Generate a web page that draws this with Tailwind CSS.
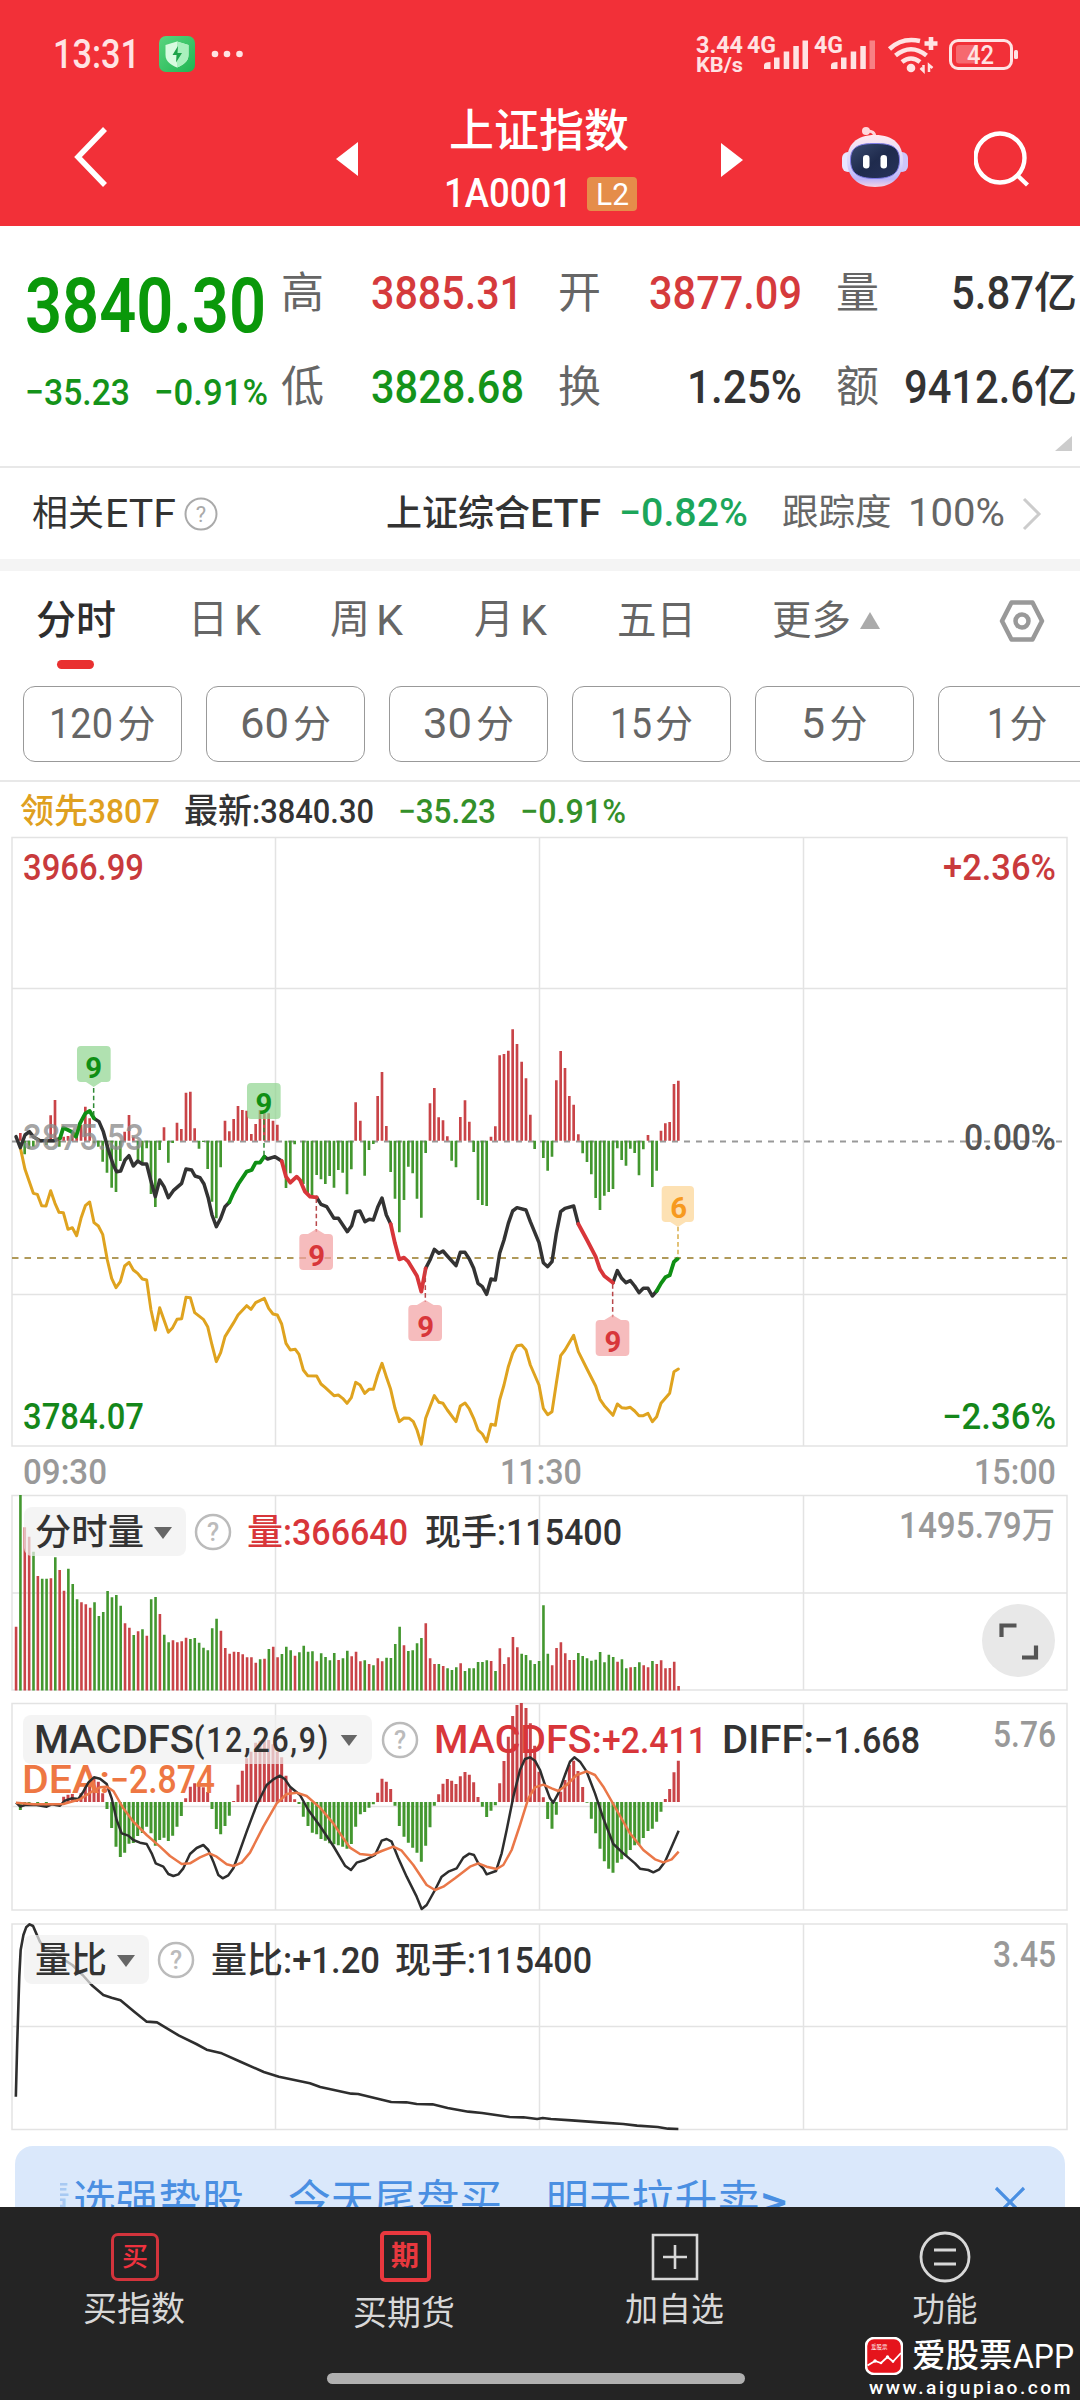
<!DOCTYPE html>
<html lang="zh-CN">
<head>
<meta charset="utf-8">
<title>上证指数</title>
<script src="https://cdn.jsdelivr.net/npm/@tailwindcss/browser@4"></script>
</head>
<body class="w-[1080px] h-[2400px] overflow-hidden bg-white font-['Roboto','Noto_Sans_CJK_SC',sans-serif] text-[#333]">
<div class="flex flex-col w-[1080px] h-[2400px] overflow-hidden">

  <!-- header -->
  <header class="h-[226px] shrink-0 bg-[#f23038] text-white">
    <div class="flex items-center h-[108px] pl-[53px]">
      <span data-w="87" class="text-[41px] leading-none font-medium text-[#ffe3e3]">13:31</span>
      <svg class="ml-[19px] w-[36px] h-[36px] shrink-0" viewBox="0 0 36 36">
        <defs><linearGradient id="gi" x1="0" y1="0" x2="1" y2="1"><stop offset="0" stop-color="#5ad57f"/><stop offset="1" stop-color="#1fb552"/></linearGradient></defs>
        <rect width="36" height="36" rx="7" fill="url(#gi)"/>
        <path d="M18 5.5 29.500 9v10c0 6-5 10-11.500 12.500C11.500 29 6.500 25 6.500 19V9Z" fill="#d8fbe0"/>
        <path d="M18 5.500 29.500 9v10c0 6-5 10-11.500 12.500Z" fill="#a9f0bd"/>
        <path d="M19 10l-5.500 9h4l-.5 7.500 6-9.500h-4.500Z" fill="#1ea34a"/>
      </svg>
      <svg class="ml-[16px] w-[32px] h-[8px] shrink-0" viewBox="0 0 32 8" fill="#ffe3e3"><circle cx="4" cy="4" r="3.300"/><circle cx="16" cy="4" r="3.300"/><circle cx="28.500" cy="4" r="3.300"/></svg>
      <svg class="ml-[447px] w-[340px] h-[60px] shrink-0" viewBox="690 24 340 60" fill="#ffe3e3" font-weight="700">
        <text x="696" y="53" font-size="23" textLength="47" lengthAdjust="spacingAndGlyphs">3.44</text>
        <text x="696" y="71.500" font-size="21" textLength="47" lengthAdjust="spacingAndGlyphs">KB/s</text>
        <text x="747" y="53" font-size="23" textLength="29" lengthAdjust="spacingAndGlyphs">4G</text>
        <text x="814" y="53" font-size="23" textLength="29" lengthAdjust="spacingAndGlyphs">4G</text>
        <path d="M764 69v-4q0-3 6.500-3V69ZM774 69V57.500h5.500V69ZM783.700 69V51.500h5.500V69ZM793.300 69V46h5.500V69ZM802.500 69V40.500h5.500V69Z"/>
        <path d="M831 69v-4q0-3 6.500-3V69ZM841 69V57.500h5.500V69ZM850.700 69V51.500h5.500V69ZM860.300 69V46h5.500V69Z"/>
        <path d="M869.500 69V40.500h5.500V69Z" opacity=".45"/>
        <g fill="none" stroke="#ffe3e3" stroke-width="4.600">
          <path d="M889.500 49Q902 37 920 41"/><path d="M895.500 55.500Q911 43 926.500 55.500"/><path d="M902 62Q911 55 920 62"/>
          <path d="M924.500 43.500h13M931 37v13"/>
          <path d="M923.500 65v6l-3-3M929 72v-7l3.500 3" stroke-width="2.500"/>
        </g>
        <circle cx="911" cy="68" r="4.300"/>
        <rect x="950.500" y="40.500" width="61" height="28" rx="7.500" fill="none" stroke="#ffe3e3" stroke-width="3"/>
        <rect x="956" y="45" width="21" height="18.500" rx="3" opacity=".32"/>
        <rect x="1014" y="50" width="4" height="9" rx="1.500"/>
        <text x="967" y="64" font-size="25" font-weight="500" textLength="27" lengthAdjust="spacingAndGlyphs">42</text>
      </svg>
    </div>
    <div class="flex items-center h-[98px] pl-[71px]">
      <svg class="w-[40px] h-[64px] shrink-0" viewBox="0 0 40 64" fill="none" stroke="#fff" stroke-width="5.500"><path d="M34 4 7 32l27 28"/></svg>
      <svg class="ml-[225px] w-[22px] h-[36px] shrink-0 mt-[4px]" viewBox="0 0 22 36"><path d="M22 1v34L0 18Z" fill="#fff"/></svg>
      <div class="ml-[82px] w-[200px] pt-[3px] shrink-0">
        <h1 class="text-[45px] leading-[56px] font-medium text-center whitespace-nowrap -ml-[2px]">上证指数</h1>
        <div class="flex items-center h-[34px] mt-[17px] mb-[2px] pl-[4px]">
          <span data-w="128" class="text-[40px] leading-none font-medium">1A0001</span>
          <span class="ml-[15px] w-[50px] h-[34px] rounded-[4px] bg-[#e58d4a] flex items-center justify-center"><span data-w="33" class="text-[31px] leading-none">L2</span></span>
        </div>
      </div>
      <svg class="ml-[81px] w-[22px] h-[36px] shrink-0 mt-[5px]" viewBox="0 0 22 36"><path d="M0 1v34l22-17Z" fill="#fff"/></svg>
      <svg class="ml-[99px] w-[66px] h-[62px] shrink-0" viewBox="0 0 66 62">
        <defs>
          <linearGradient id="rh" x1="0" y1="0" x2="0" y2="1"><stop offset="0" stop-color="#ffe9ef"/><stop offset=".55" stop-color="#d9d5fb"/><stop offset=".85" stop-color="#bcb4f7"/><stop offset="1" stop-color="#f6d3e4"/></linearGradient>
          <linearGradient id="rf" x1="0" y1="0" x2="1" y2="1"><stop offset="0" stop-color="#3a4a70"/><stop offset=".5" stop-color="#1f2b4d"/><stop offset="1" stop-color="#27325a"/></linearGradient>
        </defs>
        <path d="M24 5q9-1 9 7" fill="none" stroke="#ffd3d8" stroke-width="3"/><circle cx="24" cy="5" r="4" fill="#ffd7dc"/>
        <rect x="0" y="26" width="12" height="20" rx="6" fill="#e8e6ff"/><rect x="54" y="26" width="12" height="20" rx="6" fill="#cdc6fa"/>
        <path d="M33 9C52 9 61 19 61 34.500S51 61 33 61 5 50 5 34.500 14 9 33 9Z" fill="url(#rh)"/>
        <path d="M33 17.500C48 17.500 57.500 20 57.500 34S49 52.500 33 52.500 8.500 48 8.500 34 18 17.500 33 17.500Z" fill="url(#rf)" stroke="#7f7be8" stroke-width="1"/>
        <rect x="21" y="29" width="6.500" height="13.500" rx="3.200" fill="#fff"/><rect x="38.500" y="29" width="6.500" height="13.500" rx="3.200" fill="#fff"/>
      </svg>
      <svg class="ml-[66px] w-[56px] h-[56px] shrink-0 mt-[3px]" viewBox="0 0 56 56" fill="none" stroke="#fff" stroke-width="4.400"><circle cx="26" cy="27" r="24.500"/><path d="M43 44l10.500 10"/></svg>
    </div>
  </header>

  <!-- quote summary -->
  <section class="flex h-[240px] shrink-0 font-medium whitespace-nowrap">
    <div class="w-[281px] shrink-0 pl-[25px]">
      <div class="mt-[42px] h-[76px] flex items-center text-[#0a980a]"><span data-w="241" class="text-[76px] leading-none font-semibold">3840.30</span></div>
      <div class="mt-[26px] h-[44px] flex items-center text-[#14931a]"><span data-w="105" class="text-[37px] leading-none">−35.23</span><span data-w="114" class="ml-[24px] text-[37px] leading-none">−0.91%</span></div>
    </div>
    <div class="shrink-0 pt-[37px] w-[799px]">
      <div class="flex items-center h-[60px] text-[46px] leading-none">
        <span class="text-[43px] font-normal text-[#666] w-[90px]">高</span><span class="w-[187px] text-[#d53a3c]"><span data-w="152">3885.31</span></span>
        <span class="text-[43px] font-normal text-[#666] w-[91px]">开</span><span class="w-[187px] text-[#d53a3c]"><span data-w="153">3877.09</span></span>
        <span class="text-[43px] font-normal text-[#666] w-[115px]">量</span><span data-w="83">5.87</span><span class="text-[43px]">亿</span>
      </div>
      <div class="flex items-center h-[60px] mt-[34px] text-[46px] leading-none">
        <span class="text-[43px] font-normal text-[#666] w-[90px]">低</span><span class="w-[187px] text-[#14931a]"><span data-w="153">3828.68</span></span>
        <span class="text-[43px] font-normal text-[#666] w-[91px]">换</span><span class="w-[187px] pl-[38px]"><span data-w="115">1.25%</span></span>
        <span class="text-[43px] font-normal text-[#666] w-[68px]">额</span><span data-w="130">9412.6</span><span class="text-[43px]">亿</span>
      </div>
      <svg class="w-[17px] h-[15px] ml-[774px] mt-[19px]" viewBox="0 0 17 15"><path d="M17 0v15H0Z" fill="#ccc"/></svg>
    </div>
  </section>

  <!-- related ETF -->
  <section class="flex items-center h-[93px] shrink-0 border-t-2 border-[#e8e8e8] pl-[32px] text-[38px] leading-none whitespace-nowrap">
    <span class="text-[36px]">相关</span><span data-w="71" class="ml-[1px]">ETF</span>
    <svg class="ml-[8px] w-[34px] h-[34px] shrink-0" viewBox="0 0 34 34"><circle cx="17" cy="17" r="15.500" fill="none" stroke="#aaa" stroke-width="2"/><text x="17" y="25" font-size="22" text-anchor="middle" fill="#aaa">?</text></svg>
    <span class="ml-[168px] text-[36px] font-medium">上证综合</span><span data-w="71" class="font-medium">ETF</span>
    <span data-w="129" class="ml-[18px] font-medium text-[#1ca65a] text-[39px]">−0.82%</span>
    <span class="ml-[34px] text-[36.500px] text-[#666]">跟踪度</span>
    <span data-w="97" class="ml-[16px] text-[#666] text-[39px]">100%</span>
    <svg class="ml-[17px] w-[20px] h-[34px] shrink-0" viewBox="0 0 20 34" fill="none" stroke="#ccc" stroke-width="3"><path d="M2 2l15 15L2 32"/></svg>
  </section>
  <div class="h-[12px] shrink-0 bg-[#f4f4f4]"></div>

  <!-- period tabs -->
  <nav class="h-[109px] shrink-0 flex items-center pl-[36px] pb-[10px] text-[40px] leading-none text-[#666] whitespace-nowrap">
    <div class="w-[152px] relative text-[#2e2e2e] font-medium"><span data-w="80">分时</span><i class="absolute left-[21px] top-[59px] w-[37px] h-[9px] rounded-full bg-[#e93030]"></i></div>
    <div class="w-[142px] flex"><span data-w="40">日</span><span data-w="27" class="ml-[6px] text-[42px]">K</span></div>
    <div class="w-[144px] flex"><span data-w="40">周</span><span data-w="27" class="ml-[6px] text-[42px]">K</span></div>
    <div class="w-[143px] flex"><span data-w="40">月</span><span data-w="27" class="ml-[6px] text-[42px]">K</span></div>
    <div class="w-[155px]"><span data-w="79">五日</span></div>
    <div class="w-[227px] flex items-center"><span data-w="79">更多</span><svg class="ml-[9px] w-[20px] h-[17px]" viewBox="0 0 20 17"><path d="M10 0l10 17H0Z" fill="#aaa"/></svg></div>
    <svg class="w-[46px] h-[44px] shrink-0" viewBox="0 0 46 44" fill="none" stroke="#999" stroke-width="4.500" stroke-linejoin="round"><path d="M12.500 3.500h21L43 22l-9.500 18.500h-21L3 22Z"/><circle cx="23" cy="22" r="6.500"/></svg>
  </nav>
  <div class="h-[100px] shrink-0 flex pt-[6px] pl-[23px] gap-[24px] text-[42px] leading-none text-[#666] whitespace-nowrap">
    <div class="w-[159px] h-[76px] shrink-0 rounded-[12px] border-[1.500px] border-[#999] flex items-center justify-center"><span data-w="64">120</span><span class="text-[38px] ml-[4px]">分</span></div>
    <div class="w-[159px] h-[76px] shrink-0 rounded-[12px] border-[1.500px] border-[#999] flex items-center justify-center"><span data-w="49">60</span><span class="text-[38px] ml-[4px]">分</span></div>
    <div class="w-[159px] h-[76px] shrink-0 rounded-[12px] border-[1.500px] border-[#999] flex items-center justify-center"><span data-w="49">30</span><span class="text-[38px] ml-[4px]">分</span></div>
    <div class="w-[159px] h-[76px] shrink-0 rounded-[12px] border-[1.500px] border-[#999] flex items-center justify-center"><span data-w="42">15</span><span class="text-[38px] ml-[3px]">分</span></div>
    <div class="w-[159px] h-[76px] shrink-0 rounded-[12px] border-[1.500px] border-[#999] flex items-center justify-center"><span data-w="24">5</span><span class="text-[38px] ml-[4px]">分</span></div>
    <div class="w-[159px] h-[76px] shrink-0 rounded-[12px] border-[1.500px] border-[#999] flex items-center justify-center"><span data-w="20">1</span><span class="text-[38px] ml-[2px]">分</span></div>
  </div>
  <div class="h-[56px] shrink-0 border-t-2 border-[#e8e8e8] flex items-center pl-[20px] pt-[3px] text-[34px] leading-none font-medium whitespace-nowrap">
    <span class="text-[#dfa020] text-[34px]">领先</span><span data-w="72" class="text-[#dfa020]">3807</span>
    <span class="ml-[24px]">最新</span><span data-w="122">:3840.30</span>
    <span data-w="98" class="ml-[24px] text-[#34902a]">−35.23</span>
    <span data-w="106" class="ml-[24px] text-[#34902a]">−0.91%</span>
  </div>

  <!-- intraday chart -->
  <svg class="w-[1080px] h-[612px] shrink-0" viewBox="0 836 1080 612" font-weight="500">
    <g fill="none" stroke="#e3e3e3" stroke-width="1.500">
      <path d="M12 837.500H1067V1446H12ZM12 988.500H1067M12 1294.500H1067M275.500 837V1446M539.500 837V1446M803.500 837V1446"/>
    </g>
    <path d="M12 1141.500H1067" stroke="#999" stroke-width="2" stroke-dasharray="6 6" fill="none"/>
    <path d="M12 1258H1067" stroke="#b09a5a" stroke-width="1.800" stroke-dasharray="6.500 6" fill="none"/>
    <g transform="translate(0 960) scale(.33333)">
      <path data-bars="main" data-base="542" data-side="up" stroke="#c94448" stroke-width="8" fill="none"/>
      <path data-bars="main" data-base="542" data-side="down" stroke="#43972f" stroke-width="8" fill="none"/>
      <g fill="none" stroke-linejoin="round" stroke-linecap="round">
        <polyline stroke="#dfa31f" stroke-width="9" points="61,563 75,628 100,700 112,703 125,737 138,738 152,692 165,730 177,757 190,758 204,808 217,803 230,827 243,775 256,737 269,726 282,788 295,798 308,823 322,900 335,955 348,983 361,965 374,918 387,907 400,930 413,940 427,957 440,960 453,1050 466,1110 479,1043 492,1080 505,1117 518,1103 531,1078 545,1076 558,1012 571,1013 584,1058 610,1078 623,1100 636,1155 649,1205 662,1178 675,1130 701,1088 714,1065 740,1037 753,1048 767,1028 793,1015 806,1045 819,1062 832,1065 845,1092 858,1150 871,1170 886,1168 897,1183 910,1230 923,1247 950,1248 963,1272 976,1283 1002,1307 1015,1305 1028,1315 1041,1330 1054,1313 1067,1267 1080,1275 1094,1300 1107,1288 1120,1288 1133,1245 1146,1210 1159,1250 1172,1288 1185,1345 1198,1385 1212,1374 1228,1375 1240,1385 1251,1410 1264,1453 1277,1375 1290,1340 1303,1307 1317,1327 1329,1330 1342,1350 1368,1385 1381,1338 1395,1329 1408,1347 1421,1375 1434,1410 1447,1422 1460,1445 1473,1393 1486,1396 1499,1320 1512,1275 1525,1220 1538,1180 1551,1157 1565,1155 1578,1170 1591,1215 1617,1275 1630,1345 1643,1364 1656,1355 1669,1270 1682,1187 1695,1170 1721,1126 1735,1175 1761,1227 1787,1278 1800,1318 1813,1337 1839,1366 1852,1332 1865,1343 1878,1345 1891,1342 1904,1353 1917,1367 1930,1367 1944,1360 1957,1385 1970,1370 1983,1330 2009,1300 2022,1235 2035,1227"/>
        <g stroke="#333" stroke-width="10.500">
          <polyline points="48,530 61,563 75,525 88,515 100,530 120,542 165,542 180,535"/>
          <polyline points="282,475 297,485 310,515 325,570 340,615 350,635 362,633 375,600 387,587 400,618 413,603 427,612 440,612 452,660 466,710 479,660 492,680 505,713 520,692 545,670 558,627 575,630 585,648 600,653 612,672 625,715 636,765 649,800 662,775 675,740 688,727"/>
          <polyline points="793,590 803,597 825,590 845,603"/>
          <polyline points="950,712 963,733 980,740 1002,775 1015,775 1042,815 1055,797 1067,755 1080,753 1095,785 1108,778 1120,780 1133,742 1146,714 1159,765 1172,792"/>
          <polyline points="1277,925 1290,900 1303,868 1317,880 1329,873 1342,888 1368,917 1381,877 1395,877 1408,897 1421,925 1434,970 1447,980 1460,1003 1473,957 1486,960 1499,880 1512,840 1525,790 1538,753 1551,743 1578,750 1591,785 1617,848 1630,908 1643,920 1656,905 1669,820 1682,755 1695,745 1721,738 1735,792"/>
          <polyline points="1839,968 1852,932 1865,955 1878,968 1891,962 1904,978 1917,998 1930,985 1944,985 1957,1008 1970,993"/>
        </g>
        <g stroke="#0f8f14" stroke-width="11.500">
          <polyline points="180,535 190,503 215,515 228,530 240,490 256,460 269,453 282,475"/>
          <polyline points="688,727 700,700 715,672 740,635 755,630 767,608 780,608 793,590"/>
          <polyline points="1970,993 1983,970 1996,952 2009,946 2022,905 2033,896"/>
        </g>
        <g stroke="#d8363a" stroke-width="11.500">
          <polyline points="845,603 858,650 871,668 890,650 900,660 915,695 930,710 950,712"/>
          <polyline points="1172,792 1185,850 1198,898 1212,893 1225,905 1251,948 1264,995 1277,925"/>
          <polyline points="1735,792 1761,840 1787,890 1800,928 1813,948 1839,968"/>
        </g>
      </g>
      <g fill="none" stroke-width="4.500" stroke-dasharray="14 9">
        <path d="M281 384V470M792 480V590" stroke="#2f8a35"/>
        <path d="M949 715V815M1276 930V1026M1838 972V1072" stroke="#b8474a"/>
        <path d="M2034 800V893" stroke="#d9ae4a"/>
      </g>
      <g fill="#8fd48f" fill-opacity=".7">
        <path d="M243 258h77q12 0 12 12v84q0 12-12 12h-16l-23 15-23-15h-15q-12 0-12-12v-84q0-12 12-12Z"/>
        <path d="M753 369h77q12 0 12 12v84q0 12-12 12h-77q-12 0-12-12v-84q0-12 12-12Z"/>
      </g>
      <g fill="#f2a2a4" fill-opacity=".72">
        <path d="M910 822h14l25-15 25 15h13q12 0 12 12v84q0 12-12 12h-77q-12 0-12-12v-84q0-12 12-12Z"/>
        <path d="M1237 1035h14l25-15 25 15h13q12 0 12 12v84q0 12-12 12h-77q-12 0-12-12v-84q0-12 12-12Z"/>
        <path d="M1799 1080h14l25-15 25 15h13q12 0 12 12v84q0 12-12 12h-77q-12 0-12-12v-84q0-12 12-12Z"/>
      </g>
      <path d="M1997 678h73q12 0 12 12v84q0 12-12 12h-13l-23 15-23-15h-14q-12 0-12-12v-84q0-12 12-12Z" fill="#fcd9a0" fill-opacity=".8"/>
      <g font-size="88" font-weight="700" text-anchor="middle">
        <text x="281" y="353" fill="#0f8f14">9</text><text x="792" y="463" fill="#0f8f14">9</text>
        <text x="950" y="917" fill="#d8363a">9</text><text x="1277" y="1130" fill="#d8363a">9</text><text x="1839" y="1175" fill="#d8363a">9</text>
        <text x="2036" y="773" fill="#f79a1e">6</text>
      </g>
    </g>
    <g font-size="36">
      <text x="23" y="880" textLength="121" lengthAdjust="spacingAndGlyphs" fill="#c93a3c">3966.99</text>
      <text x="943" y="880" textLength="113" lengthAdjust="spacingAndGlyphs" fill="#c93a3c">+2.36%</text>
      <text x="23" y="1150" textLength="121" lengthAdjust="spacingAndGlyphs" fill="#8c8c8c" fill-opacity=".8">3875.53</text>
      <text x="964" y="1150" textLength="92" lengthAdjust="spacingAndGlyphs" fill="#555">0.00%</text>
      <text x="23" y="1429" textLength="121" lengthAdjust="spacingAndGlyphs" fill="#14871a">3784.07</text>
      <text x="942" y="1429" textLength="114" lengthAdjust="spacingAndGlyphs" fill="#14871a">−2.36%</text>
    </g>
  </svg>
  <div class="h-[46px] shrink-0 flex items-center justify-between pt-[2px] pl-[23px] pr-[24px] text-[35px] leading-none text-[#999] font-medium">
    <span data-w="84">09:30</span><span data-w="82">11:30</span><span data-w="82">15:00</span>
  </div>

  <!-- volume -->
  <section class="relative h-[208px] shrink-0">
    <svg class="w-[1080px] h-[200px]" viewBox="0 1494 1080 200">
      <path d="M12 1495.500H1067V1690H12ZM12 1593H1067M275.500 1495V1690M539.500 1495V1690M803.500 1495V1690" fill="none" stroke="#e3e3e3" stroke-width="1.500"/>
      <path id="vr" stroke="#c94448" stroke-width="2.600" fill="none"/>
      <path id="vg" stroke="#43972f" stroke-width="2.600" fill="none"/>
      <text x="899" y="1538" font-size="36" font-weight="500" fill="#999" textLength="156" lengthAdjust="spacingAndGlyphs">1495.79万</text>
      <circle cx="1018.500" cy="1640.500" r="36.500" fill="#e8e8e8"/>
      <path d="M1001.500 1637v-11.500h15M1022 1657.500h14v-12" fill="none" stroke="#555" stroke-width="4.200"/>
    </svg>
    <div class="absolute left-[24px] top-[13px] flex items-center h-[49px] text-[36px] leading-none font-medium whitespace-nowrap">
      <div class="w-[162px] h-[49px] rounded-[8px] bg-[#efefef]/70 flex items-center pl-[11px] pt-[2px]"><span data-w="109">分时量</span><svg class="ml-[10px] w-[18px] h-[12px]" viewBox="0 0 18 12"><path d="M0 0h18L9 12Z" fill="#666"/></svg></div>
      <svg class="ml-[8px] w-[38px] h-[38px] shrink-0" viewBox="0 0 38 38"><circle cx="19" cy="19" r="17" fill="none" stroke="#bbb" stroke-width="2.500"/><text x="19" y="28" font-size="25" text-anchor="middle" fill="#bbb">?</text></svg>
      <span class="ml-[15px] mt-[2px] text-[#d8363a]">量</span><span data-w="125" class="mt-[2px] text-[#d8363a]">:366640</span>
      <span class="ml-[17px] mt-[2px]">现手</span><span data-w="125" class="mt-[2px]">:115400</span>
    </div>
  </section>

  <!-- MACD -->
  <section class="relative h-[220px] shrink-0">
    <svg class="w-[1080px] h-[212px]" viewBox="0 1702 1080 212">
      <path d="M12 1703.500H1067V1910H12ZM12 1806.500H1067M275.500 1703V1910M539.500 1703V1910M803.500 1703V1910" fill="none" stroke="#e3e3e3" stroke-width="1.500"/>
      <g transform="translate(0 1690) scale(.33333)" fill="none">
        <path data-bars="macd" data-base="336" data-side="up" stroke="#c94448" stroke-width="9"/>
        <path data-bars="macd" data-base="336" data-side="down" stroke="#43972f" stroke-width="9"/>
      </g>
      <text x="993" y="1747" font-size="36" font-weight="500" fill="#999" textLength="63" lengthAdjust="spacingAndGlyphs">5.76</text>
    </svg>
    <div class="absolute left-[23px] top-[13px] flex items-center h-[49px] text-[39px] leading-none font-medium whitespace-nowrap">
      <div class="w-[349px] h-[49px] rounded-[8px] bg-[#efefef]/70 flex items-center pl-[11px] pt-[2px]"><span data-w="160">MACDFS</span><span data-w="136" class="text-[35px] tracking-[2px]">(12,26,9)</span><svg class="ml-[10px] w-[18px] h-[11px]" viewBox="0 0 18 12"><path d="M0 0h18L9 12Z" fill="#666"/></svg></div>
      <svg class="ml-[9px] w-[38px] h-[38px] shrink-0" viewBox="0 0 38 38"><circle cx="19" cy="19" r="17" fill="none" stroke="#bbb" stroke-width="2.500"/><text x="19" y="28" font-size="25" text-anchor="middle" fill="#bbb">?</text></svg>
      <span data-w="168" class="ml-[15px] mt-[2px] text-[#d8363a]">MACDFS:</span><span data-w="105" class="mt-[2px] text-[#d8363a] text-[37px]">+2.411</span>
      <span data-w="92" class="ml-[15px] mt-[2px]">DIFF:</span><span data-w="106" class="mt-[2px] text-[37px]">−1.668</span>
    </div>
    <div class="absolute left-[22px] top-[59px] flex text-[38px] leading-[39px] font-medium text-[#ee7743] whitespace-nowrap"><span data-w="88">DEA:</span><span data-w="105">−2.874</span></div>
    <svg class="absolute left-0 top-0 w-[1080px] h-[212px]" viewBox="0 1702 1080 212">
      <g transform="translate(0 1690) scale(.33333)" fill="none" stroke-width="7.500" stroke-linejoin="round">
        <polyline stroke="#2e2e2e" points="48,338 61,350 75,345 110,345 140,350 155,343 180,347 195,332 215,325 235,327 250,305 265,278 282,262 300,266 320,282 335,325 350,390 365,430 385,437 400,450 420,458 440,462 455,490 467,520 490,530 505,552 520,558 535,553 550,535 570,492 590,474 610,465 625,480 640,515 655,555 668,565 685,556 700,535 715,495 740,425 770,345 800,285 820,268 840,257 855,268 870,290 900,315 925,360 960,408 1000,468 1035,527 1053,540 1070,518 1095,510 1125,495 1145,452 1160,447 1175,455 1195,505 1220,560 1250,620 1265,657 1280,645 1305,600 1325,560 1345,545 1370,535 1390,503 1408,491 1422,495 1435,520 1450,535 1460,553 1488,543 1505,490 1520,420 1540,320 1560,240 1575,207 1590,202 1605,212 1620,240 1635,285 1650,325 1660,338 1675,310 1695,255 1710,215 1723,202 1740,215 1760,245 1785,310 1810,385 1840,462 1870,490 1905,520 1920,536 1945,540 1960,547 1978,538 1995,515 2015,470 2036,422"/>
        <polyline stroke="#ea7748" points="48,338 100,343 150,343 190,342 240,328 270,308 300,292 320,290 340,303 370,355 400,395 440,435 480,470 510,498 545,522 570,520 600,502 628,490 650,500 680,523 700,528 725,518 750,488 790,410 830,340 860,312 890,308 920,318 960,353 1000,400 1030,445 1050,473 1080,492 1115,496 1145,483 1180,470 1205,482 1240,525 1280,585 1305,600 1330,590 1365,565 1410,530 1435,520 1460,530 1490,537 1510,525 1535,480 1560,405 1585,325 1605,292 1630,284 1655,295 1675,303 1700,285 1730,255 1760,244 1785,255 1810,290 1850,360 1890,430 1930,480 1965,508 1990,517 2015,508 2036,485"/>
      </g>
    </svg>
  </section>

  <!-- volume ratio -->
  <section class="relative h-[224px] shrink-0">
    <svg class="w-[1080px] h-[212px]" viewBox="0 1922 1080 212">
      <path d="M12 1924H1067V2129.500H12ZM12 2026.500H1067M275.500 1924V2130M539.500 1924V2130M803.500 1924V2130" fill="none" stroke="#e3e3e3" stroke-width="1.500"/>
      <g transform="translate(0 1910) scale(.6887 .33333)" fill="none">
        <polyline vector-effect="non-scaling-stroke" stroke="#2e2e2e" stroke-width="2.600" stroke-linejoin="round" points="23,560 25,400 28,200 30,120 34,75 38,52 43,43 48,48 53,72 58,95 65,115 75,125 90,145 105,165 120,195 133,225 150,255 162,263 175,271 195,305 213,335 228,337 240,352 260,377 285,402 300,419 322,430 350,456 383,486 405,500 450,520 465,531 510,551 520,552 568,576 590,577 605,582 628,583 650,594 680,605 700,609 740,621 760,622 780,627 788,624 800,627 830,631 870,637 905,642 925,647 955,651 970,656 985,657"/>
      </g>
      <text x="993" y="1967" font-size="36" font-weight="500" fill="#999" textLength="63" lengthAdjust="spacingAndGlyphs">3.45</text>
    </svg>
    <div class="absolute left-[24px] top-[13px] flex items-center h-[49px] text-[36px] leading-none font-medium whitespace-nowrap">
      <div class="w-[125px] h-[49px] rounded-[8px] bg-[#efefef]/70 flex items-center pl-[11px] pt-[2px]"><span data-w="72">量比</span><svg class="ml-[10px] w-[18px] h-[12px]" viewBox="0 0 18 12"><path d="M0 0h18L9 12Z" fill="#666"/></svg></div>
      <svg class="ml-[8px] w-[38px] h-[38px] shrink-0" viewBox="0 0 38 38"><circle cx="19" cy="19" r="17" fill="none" stroke="#bbb" stroke-width="2.500"/><text x="19" y="28" font-size="25" text-anchor="middle" fill="#bbb">?</text></svg>
      <span class="ml-[16px] mt-[2px]">量比</span><span data-w="97" class="mt-[2px]">:+1.20</span>
      <span class="ml-[15px] mt-[2px]">现手</span><span data-w="125" class="mt-[2px]">:115400</span>
    </div>
  </section>

  <!-- promo banner -->
  <div class="ml-[15px] w-[1050px] h-[61px] shrink-0 overflow-hidden rounded-t-[18px] bg-[#dae8fb] flex text-[43px] leading-none text-[#4a8fe2] whitespace-nowrap pt-[34px] pl-[45px]">
    <span class="w-[10px] overflow-hidden flex justify-end opacity-35">精</span><span data-w="171" class="ml-[3px]">选强势股</span><span data-w="214" class="ml-[44px]">今天尾盘买</span><span data-w="214" class="ml-[44px]">明天拉升卖</span><span data-w="27" class="font-medium">&gt;</span>
    <svg class="ml-[207px] mt-[6px] w-[32px] h-[32px] shrink-0" viewBox="0 0 32 32" stroke="#4a8fe2" stroke-width="3.200"><path d="M2 2l28 28M30 2 2 30"/></svg>
  </div>

  <!-- bottom bar -->
  <footer class="relative h-[193px] shrink-0 bg-[#242424] text-[#d8d8d8] leading-none whitespace-nowrap">
    <div class="grid grid-cols-4">
      <div class="flex flex-col items-center pt-[26px]">
        <span class="w-[48px] h-[48px] rounded-[7px] border-[3px] border-[#d3343c] flex items-center justify-center text-[26px] font-medium text-[#f0323f]">买</span>
        <span class="mt-[11px] mr-[2px] text-[34px]">买指数</span>
      </div>
      <div class="flex flex-col items-center pt-[24px]">
        <span class="w-[51px] h-[51px] rounded-[5px] border-4 border-[#e8383e] flex items-center justify-center text-[28px] font-bold text-[#e8383e]">期</span>
        <span class="mt-[14px] mr-[2px] text-[34px]">买期货</span>
      </div>
      <div class="flex flex-col items-center pt-[26px]">
        <svg class="w-[48px] h-[48px]" viewBox="0 0 48 48" fill="none" stroke="#d8d8d8" stroke-width="2.600"><path d="M2 2h44v44H2ZM24 12v24M12 24h24"/></svg>
        <span class="mt-[12px] mr-[1px] text-[33px]">加自选</span>
      </div>
      <div class="flex flex-col items-center pt-[24px]">
        <svg class="w-[52px] h-[52px]" viewBox="0 0 52 52" fill="none" stroke="#d8d8d8" stroke-width="2.800"><circle cx="26" cy="26" r="24"/><path d="M15 19h22M15 33h22"/></svg>
        <span class="mt-[11px] text-[32.500px]">功能</span>
      </div>
    </div>
    <div class="absolute left-[327px] top-[166px] w-[418px] h-[11px] rounded-full bg-[#b0b0b0]"></div>
    <div class="absolute left-[865px] top-[130px] w-[215px] text-white">
      <div class="flex items-center h-[38px]">
        <svg class="w-[38px] h-[38px] shrink-0" viewBox="0 0 38 38"><rect x="1" y="1" width="36" height="36" rx="8" fill="#e5141c" stroke="#fff" stroke-width="2.500"/><path d="M2.500 28.500 10 24l6 2 6.500-6 5.500 4.500 8-8.500" fill="none" stroke="#fff" stroke-width="1.800"/><g fill="#fff"><circle cx="10" cy="24" r="1.700"/><circle cx="16" cy="26" r="1.300"/><circle cx="22.500" cy="20" r="1.700"/><circle cx="28" cy="24.500" r="1.300"/></g><text x="6" y="11.500" font-size="5.500" fill="#fff">爱股票</text></svg>
        <span class="ml-[9px] text-[33.500px] leading-[36px] font-medium">爱股票</span><span data-w="61" class="text-[34px] leading-[36px]">APP</span>
      </div>
      <div class="mt-[3px] ml-[4px] text-[19px] leading-[20px]"><span data-w="204" class="tracking-[2.500px] font-medium">www.aigupiao.com</span></div>
    </div>
  </footer>
</div>

<script>
function fit(el, real) {
  const w = +el.dataset.w;
  if (!real) return;
  el.style.transformOrigin = '0 50%';
  el.style.transform = `scaleX(${w / real})`;
  el.style.marginRight = (w - real) + 'px';
}
const watcher = new ResizeObserver(list => list.forEach(e => fit(e.target, e.borderBoxSize[0].inlineSize)));
document.querySelectorAll('[data-w]').forEach(el => {
  el.style.display = 'inline-block';
  el.style.flexShrink = 0;
  el.style.whiteSpace = 'nowrap';
  watcher.observe(el);
});

const bars = {
  main: '61 519 74 583 87 567 100 560 139 555 152 466 165 420 178 560 191 530 204 528 217 515 230 520 243 495 256 440 269 475 282 550 295 560 308 605 321 638 335 683 348 696 361 603 374 515 387 465 400 530 414 600 427 615 440 565 453 702 466 741 479 570 492 502 505 608 518 549 531 488 544 507 558 398 571 395 584 505 597 566 610 546 623 627 636 725 649 775 662 622 675 482 688 514 701 477 714 438 727 450 740 452 754 522 767 492 780 450 793 450 806 460 819 482 832 494 858 684 871 640 884 553 910 672 923 705 936 708 950 645 963 658 976 672 989 648 1002 683 1015 630 1028 638 1041 703 1054 628 1067 427 1081 482 1094 647 1107 570 1120 552 1133 408 1146 336 1159 498 1172 636 1185 716 1198 817 1212 720 1225 620 1238 640 1251 716 1264 773 1277 579 1290 430 1303 384 1316 472 1329 481 1342 529 1355 602 1368 622 1381 471 1395 421 1408 485 1421 576 1434 720 1447 735 1460 738 1473 530 1486 499 1499 286 1512 282 1525 272 1538 208 1551 252 1565 305 1578 355 1591 464 1604 567 1630 594 1643 632 1656 590 1669 361 1682 273 1695 324 1708 408 1721 434 1735 523 1748 580 1761 606 1774 643 1787 714 1800 750 1813 707 1826 696 1839 687 1852 565 1865 600 1878 617 1891 566 1904 579 1917 646 1930 568 1944 525 1957 681 1970 632 1983 512 1996 490 2009 486 2022 372 2035 362',
  macd: '61 360 74 347 87 344 113 345 139 350 191 320 204 314 217 312 230 325 243 310 256 290 269 272 282 262 295 275 308 310 321 357 335 414 348 470 361 501 374 488 387 461 400 459 413 438 427 429 440 410 453 430 466 467 479 450 492 443 505 453 518 437 531 410 544 378 557 325 571 290 584 280 597 278 610 292 623 306 636 357 649 417 662 433 675 408 688 377 701 333 714 284 727 242 740 205 753 185 767 158 780 152 793 150 806 150 819 163 832 185 845 202 858 257 871 295 884 328 897 342 910 380 924 408 937 428 950 433 963 447 976 452 989 460 1002 463 1015 466 1028 470 1041 476 1054 462 1067 410 1081 373 1094 366 1107 353 1120 343 1133 308 1146 266 1159 275 1172 297 1185 347 1198 408 1212 440 1225 458 1238 473 1251 488 1264 515 1277 467 1290 412 1303 347 1316 313 1329 281 1342 267 1355 272 1368 282 1381 259 1395 246 1408 254 1421 277 1434 321 1447 350 1460 381 1473 362 1486 346 1499 280 1512 213 1525 140 1538 78 1551 45 1564 39 1578 54 1591 100 1604 167 1617 245 1630 322 1643 387 1656 416 1669 374 1682 305 1695 270 1708 225 1721 212 1734 243 1748 291 1761 338 1774 386 1787 430 1800 476 1813 514 1826 536 1839 548 1852 518 1865 508 1878 498 1891 480 1904 466 1917 464 1930 444 1944 423 1957 416 1970 395 1983 365 1996 327 2009 297 2022 247 2035 212'
};
document.querySelectorAll('[data-bars]').forEach(p => {
  const v = bars[p.dataset.bars].split(' ').map(Number), base = +p.dataset.base;
  let d = '';
  for (let i = 0; i < v.length; i += 2)
    if ((v[i + 1] < base) === (p.dataset.side === 'up')) d += `M${v[i]} ${base}V${v[i + 1]}`;
  p.setAttribute('d', d);
});

// Per-minute volume; the letter is the bar's direction
const vol = 'r440 g45 r142 r170 g215 r288 g296 g296 r295 g232 r270 r332 g266 g312 g358 r367 r373 r383 g367 g408 g396 g333 g352 g345 g377 r430 r443 g465 r454 g448 r467 g358 g351 r402 g464 g487 r481 r487 r484 r473 g477 g474 g488 g503 g511 g445 g416 r452 r504 r521 r515 r516 r523 r532 r532 r548 g538 r536 g507 r500 r532 g522 g500 g511 r527 g517 g497 g515 g514 r544 g520 g531 g541 g519 r540 g535 g512 r529 r515 r544 g541 r552 g556 r535 r544 g533 g534 g492 g440 r496 g513 g511 g490 g474 r430 r535 r552 g552 r558 g565 g570 g562 r550 g573 g565 g565 g546 g546 g541 r543 g573 r505 r552 r532 r471 r502 g521 g525 g541 g552 g543 g376 g521 r556 r504 r487 r520 r540 r540 g519 g528 g535 g542 g539 g516 g547 g524 g531 r545 g538 g565 r562 g561 g547 r556 r562 g543 r552 r541 r565 r564 r545 r618'.split(' ');
const dd = { r: '', g: '' };
vol.forEach((s, i) => { dd[s[0]] += `M${(16.07 + 4.3586 * i).toFixed(2)} 1690.500V${(1480 + s.slice(1) / 3).toFixed(1)}`; });
document.getElementById('vr').setAttribute('d', dd.r);
document.getElementById('vg').setAttribute('d', dd.g);
</script>
</body>
</html>
